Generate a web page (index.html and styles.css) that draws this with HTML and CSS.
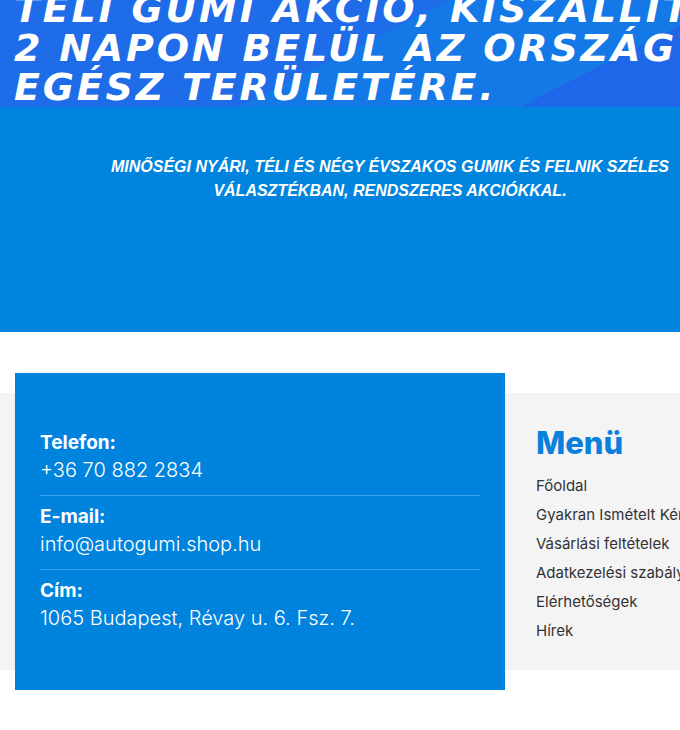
FILE: index.html
```html
<!DOCTYPE html>
<html lang="hu">
<head>
<meta charset="utf-8">
<link rel="stylesheet" href="styles.css">
</head>
<body>
<section class="hero">
  <div class="banner">
    <h1 class="banner-title">
      <span class="line">TÉLI GUMI AKCIÓ, KISZÁLLÍTÁS</span>
      <span class="line">2 NAPON BELÜL AZ ORSZÁG</span>
      <span class="line">EGÉSZ TERÜLETÉRE.</span>
    </h1>
  </div>
  <p class="hero-sub">MINŐSÉGI NYÁRI, TÉLI ÉS NÉGY ÉVSZAKOS GUMIK ÉS FELNIK SZÉLES VÁLASZTÉKBAN, RENDSZERES AKCIÓKKAL.</p>
</section>
<footer class="footer">
  <div class="contact-card">
    <div class="contact-item">
      <div class="contact-label">Telefon:</div>
      <div class="contact-value">+36 70 882 2834</div>
    </div>
    <div class="contact-item">
      <div class="contact-label">E-mail:</div>
      <div class="contact-value">info@autogumi.shop.hu</div>
    </div>
    <div class="contact-item">
      <div class="contact-label">Cím:</div>
      <div class="contact-value">1065 Budapest, Révay u. 6. Fsz. 7.</div>
    </div>
  </div>
  <nav class="menu">
    <h2 class="menu-title">Menü</h2>
    <ul class="menu-list">
      <li>Főoldal</li>
      <li>Gyakran Ismételt Kérdések</li>
      <li>Vásárlási feltételek</li>
      <li>Adatkezelési szabályzat</li>
      <li>Elérhetőségek</li>
      <li>Hírek</li>
    </ul>
  </nav>
</footer>
</body>
</html>
```
FILE: styles.css
```css
* { box-sizing: border-box; }
html, body { margin: 0; padding: 0; }
body {
  width: 680px;
  height: 730px;
  overflow: hidden;
  background: #ffffff;
  font-family: "Inter", "Liberation Sans", sans-serif;
}
.hero {
  background: #0084dd;
  height: 332px;
}
.banner {
  height: 107px;
  overflow: hidden;
  background: linear-gradient(153deg, #1e6ce8 0 50.5%, #1479e6 50.5% 82%, #1e67e8 82% 100%);
}
.banner-title {
  margin: -10px 0 0 14px;
  font-family: "DejaVu Sans", "Liberation Sans", sans-serif;
  font-weight: 700;
  font-style: italic;
  font-size: 38px;
  line-height: 39px;
  letter-spacing: 2.8px;
  color: #ffffff;
  white-space: nowrap;
}
.banner-title .line { display: block; }
.hero-sub {
  margin: 48px 0 0 100px;
  text-align: center;
  font-family: "Liberation Sans", Arial, sans-serif;
  font-weight: 700;
  font-style: italic;
  font-size: 16px;
  line-height: 24px;
  color: #ffffff;
}
.footer {
  margin-top: 61px;
  height: 277px;
  background: #f4f4f4;
  display: flex;
  align-items: flex-start;
}
.contact-card {
  margin: -20px 0 0 15px;
  width: 490px;
  height: 317px;
  background: #0083dd;
  padding: 57px 25px 0 25px;
  color: #ffffff;
  box-shadow: 0 0 6px rgba(0,0,0,0.04);
}
.contact-item {
  padding: 8px 0 11px;
  border-bottom: 1px solid #39a0ee;
}
.contact-item:first-child { padding-top: 0; }
.contact-item:last-child { border-bottom: none; }
.contact-label {
  font-weight: 700;
  font-size: 19px;
  line-height: 26px;
}
.contact-value {
  font-weight: 300;
  font-size: 20px;
  line-height: 28px;
}
.menu {
  padding: 30px 0 0 31px;
  flex: 1;
  white-space: nowrap;
  overflow: hidden;
}
.menu-title {
  margin: 0 0 8px;
  font-size: 31px;
  font-weight: 800;
  line-height: 40px;
  color: #0a80dc;
}
.menu-list {
  list-style: none;
  margin: 0;
  padding: 0;
}
.menu-list li {
  font-size: 15px;
  line-height: 29px;
  color: #333333;
}
```
